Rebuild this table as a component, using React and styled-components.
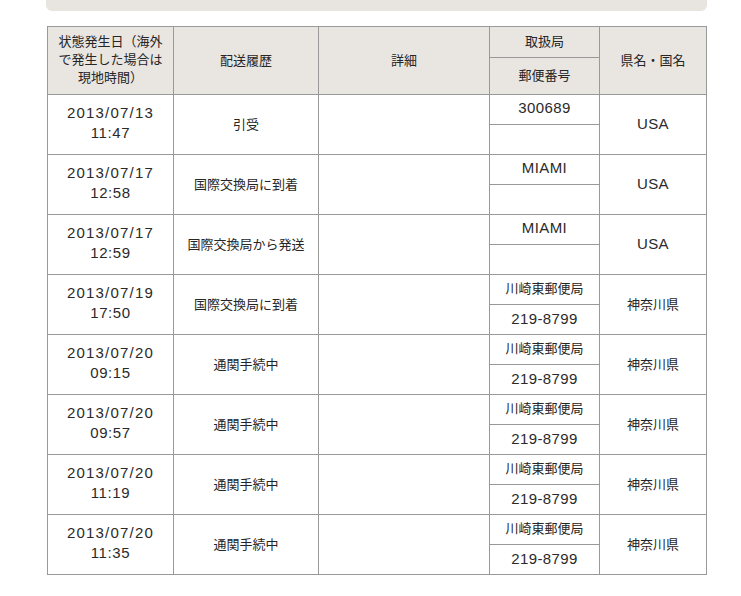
import React from "react";
import styled, { createGlobalStyle } from "styled-components";

const Global = createGlobalStyle`
  html, body { margin: 0; padding: 0; background: #ffffff; }
  body { font-family: "Liberation Sans", "Noto Sans CJK JP", sans-serif; color: #262626; }
`;

const Page = styled.div`
  width: 661px;
  margin-left: 46px;
`;

const TopPanel = styled.div`
  height: 11px;
  background: #e8e4e0;
  border-radius: 0 0 6px 6px;
`;

const Grid = styled.div`
  margin: 15px 0 0 1px;
  width: 660px;
  display: grid;
  grid-template-columns: 126px 145px 171px 110px 107px;
  grid-template-rows: 31px 37px;
  grid-auto-rows: 30px;
  border-top: 1px solid #999;
  border-left: 1px solid #999;
  box-sizing: border-box;
`;

const Cell = styled.div`
  box-sizing: border-box;
  border-right: 1px solid #999;
  border-bottom: 1px solid #999;
  display: flex;
  flex-direction: column;
  align-items: center;
  justify-content: center;
  text-align: center;
  padding: 0 6px ${(p) => (p.$lift ? "4px" : "2px")};
  background: ${(p) => (p.$head ? "#e9e5e1" : "#ffffff")};
  grid-row: ${(p) => (p.$span ? "span 2" : "auto")};
  font-family: "Noto Sans CJK JP", sans-serif;
  font-size: 13px;
  line-height: 18px;
`;

const Latin = styled.span`
  font-family: "Liberation Sans", "Noto Sans CJK JP", sans-serif;
  font-size: 15px;
  line-height: 20px;
  color: #2a2a2a;
  letter-spacing: ${(p) => p.$ls || "0.4px"};
`;

const rows = [
  { d: "2013/07/13", t: "11:47", s: "引受", o: "300689", z: "", p: "USA", lo: true },
  { d: "2013/07/17", t: "12:58", s: "国際交換局に到着", o: "MIAMI", z: "", p: "USA", lo: true },
  { d: "2013/07/17", t: "12:59", s: "国際交換局から発送", o: "MIAMI", z: "", p: "USA", lo: true },
  { d: "2013/07/19", t: "17:50", s: "国際交換局に到着", o: "川崎東郵便局", z: "219-8799", p: "神奈川県" },
  { d: "2013/07/20", t: "09:15", s: "通関手続中", o: "川崎東郵便局", z: "219-8799", p: "神奈川県" },
  { d: "2013/07/20", t: "09:57", s: "通関手続中", o: "川崎東郵便局", z: "219-8799", p: "神奈川県" },
  { d: "2013/07/20", t: "11:19", s: "通関手続中", o: "川崎東郵便局", z: "219-8799", p: "神奈川県" },
  { d: "2013/07/20", t: "11:35", s: "通関手続中", o: "川崎東郵便局", z: "219-8799", p: "神奈川県" },
];

export default function App() {
  return (
    <>
      <Global />
      <Page>
        <TopPanel />
        <Grid>
          <Cell $head $span $lift>状態発生日（海外で発生した場合は現地時間）</Cell>
          <Cell $head $span>配送履歴</Cell>
          <Cell $head $span>詳細</Cell>
          <Cell $head>取扱局</Cell>
          <Cell $head $span>県名・国名</Cell>
          <Cell $head>郵便番号</Cell>
          {rows.map((r, i) => (
            <React.Fragment key={i}>
              <Cell $span $lift>
                <Latin $ls="1.2px">{r.d}</Latin>
                <Latin $ls="0.6px">{r.t}</Latin>
              </Cell>
              <Cell $span>{r.s}</Cell>
              <Cell $span />
              <Cell $lift>{r.lo ? <Latin>{r.o}</Latin> : r.o}</Cell>
              <Cell $span>{r.lo ? <Latin>{r.p}</Latin> : r.p}</Cell>
              <Cell>{r.z ? <Latin>{r.z}</Latin> : null}</Cell>
            </React.Fragment>
          ))}
        </Grid>
      </Page>
    </>
  );
}
